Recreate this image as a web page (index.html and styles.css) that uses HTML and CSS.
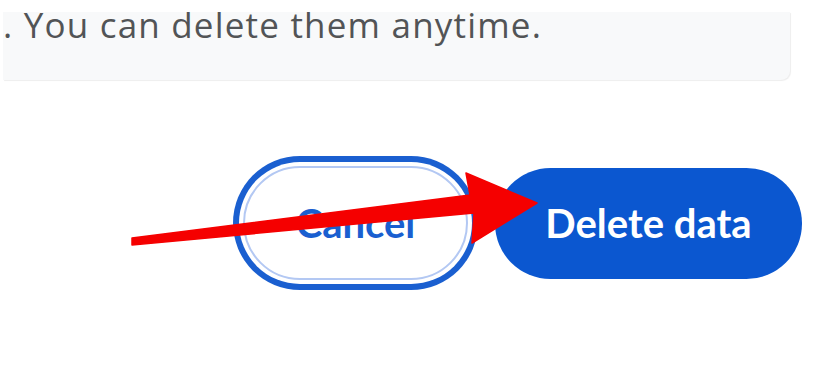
FILE: index.html
```html
<!DOCTYPE html>
<html lang="en">
<head>
<meta charset="utf-8">
<title>Delete data</title>
<link rel="stylesheet" href="styles.css">
</head>
<body>
<div class="page">
  <div class="notice">
    <p class="notice-text">. You can delete them anytime.</p>
  </div>
  <div class="actions">
    <button class="btn btn-cancel" type="button">Cancel</button>
    <button class="btn btn-delete" type="button">Delete data</button>
  </div>
  <svg class="arrow" width="825" height="369" viewBox="0 0 825 369" aria-hidden="true">
    <polygon points="132,238 470,195 466,173 537,203 472,243 474,213 132,245" fill="#f50000" stroke="#f50000" stroke-width="1.5" stroke-linejoin="round"/>
  </svg>
</div>
</body>
</html>
```

FILE: styles.css
```css
* { box-sizing: border-box; }
html, body { margin: 0; padding: 0; background: #ffffff; }
body { width: 825px; height: 369px; overflow: hidden; }

.page {
  position: relative;
  width: 825px;
  height: 369px;
  padding-top: 12px;
}

.notice {
  margin-left: 3px;
  width: 787px;
  height: 68px;
  background: #f8f9fa;
  border-radius: 0 0 9px 0;
  box-shadow: 1px 1px 1px rgba(0, 0, 0, 0.07);
}

.notice-text {
  margin: 0;
  position: relative;
  top: -5px;
  padding-left: 0;
  font-family: "Open Sans", "Noto Sans", sans-serif;
  font-size: 35px;
  line-height: 35px;
  letter-spacing: 1.2px;
  color: #525456;
  white-space: nowrap;
}

.actions {
  display: flex;
  justify-content: flex-end;
  align-items: center;
  gap: 27px;
  height: 114px;
  margin-top: 86px;
  padding-right: 23px;
}

.btn {
  font-family: Lato, "Open Sans", sans-serif;
  font-weight: 700;
  font-size: 40px;
  border-radius: 999px;
  cursor: pointer;
  padding: 0;
}

.btn-cancel {
  width: 225px;
  height: 114px;
  background: #ffffff;
  color: #1a5fd0;
  border: 2px solid #b3c8f3;
  box-shadow: 0 0 0 4px #ffffff, 0 0 0 10px #1a5fd0;
}

.btn-delete {
  width: 307px;
  height: 111px;
  background: #0b57d0;
  color: #ffffff;
  border: none;
}

.arrow {
  position: absolute;
  left: 0;
  top: 0;
  pointer-events: none;
}
```
